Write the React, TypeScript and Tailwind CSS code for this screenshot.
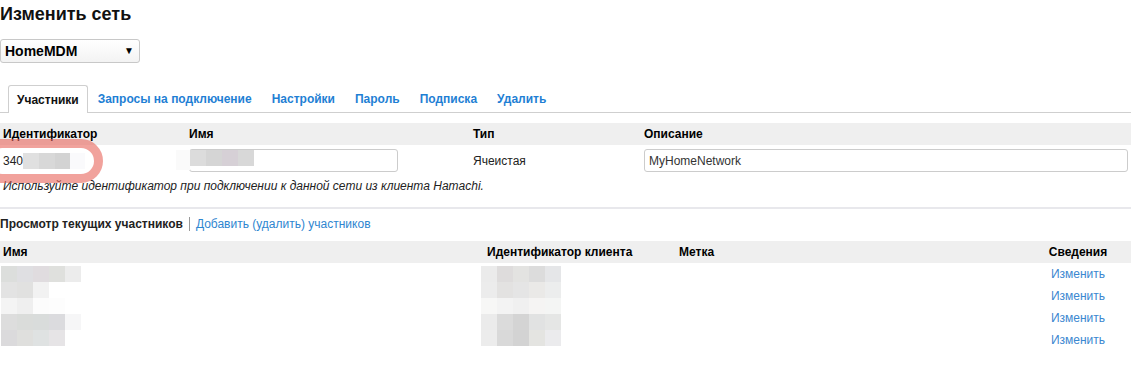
import React from "react";

const F = "font-['Liberation_Sans',Arial,sans-serif]";

function Mosaic({ rows, cell = 16 }: { rows: string[][]; cell?: number }) {
  return (
    <div className="flex flex-col">
      {rows.map((r, i) => (
        <div key={i} className="flex">
          {r.map((c, j) => (
            <div key={j} style={{ width: cell, height: cell, background: c }} />
          ))}
        </div>
      ))}
    </div>
  );
}

const nameMosaic = [
  ["#dcdedc", "#dfdfe2", "#e0dcdf", "#dfe0dd", "#ececec"],
  ["#e3e3e3", "#e1e1e0", "#f2f2f2", "#ffffff", "#ffffff"],
  ["#f4f4f4", "#efefef", "#fcfcfc", "#fdfdfd", "#ffffff"],
  ["#dddddd", "#dadcda", "#d9dcdb", "#dbdbde", "#f6f6f7"],
  ["#dbdadc", "#dfdfdd", "#dfe2e2", "#e6e4e6", "#ffffff"],
];

const idMosaic = [
  ["#ebebeb", "#dedcdc", "#e3e3e1", "#dcdcdc", "#e5e6e8"],
  ["#ececec", "#e3e2e1", "#e5e5e5", "#eae9e7", "#eceded"],
  ["#f7f7f6", "#f3f3f3", "#f0f0f0", "#f5f4f3", "#f4f5f4"],
  ["#ebebeb", "#dbdbdb", "#d4d4d4", "#e1e2e2", "#e5e6e5"],
  ["#ececec", "#d9d9d9", "#d3d3d3", "#e4e4e1", "#ebebed"],
];

export default function App() {
  const tabs = ["Запросы на подключение", "Настройки", "Пароль", "Подписка", "Удалить"];
  return (
    <div className={`${F} relative w-[1144px] h-[372px] overflow-hidden bg-white text-[12px] text-[#222]`}>
      <div className="w-[1131px]">
        <h1 className="pt-[3px] text-[18px] font-bold leading-[22px] text-[#111]">Изменить сеть</h1>

        <div className="mt-[14px] flex h-[24px] w-[140px] items-center justify-between rounded-[3px] border border-[#c8c8c8] bg-gradient-to-b from-white to-[#f3f3f3] pl-[4px] pr-[5px]">
          <span className="text-[14px] font-bold text-black">HomeMDM</span>
          <span className="text-[10px] leading-none text-black">▼</span>
        </div>

        <div className="mt-[22px] flex h-[28px] items-end border-b border-[#cfcfcf]">
          <div className="-mb-px ml-[8px] flex h-[28px] items-center rounded-t-[3px] border border-b-0 border-[#cfcfcf] bg-white px-[8px] font-bold text-[#111]">
            Участники
          </div>
          {tabs.map((t) => (
            <div key={t} className="flex h-[27px] items-center px-[10px] font-bold text-[#1f7fd4]">
              {t}
            </div>
          ))}
        </div>

        <div className="mt-[10px] grid h-[22px] grid-cols-[189px_284px_171px_1fr] items-center bg-[#efefef] font-bold text-black">
          <div className="pl-[3px]">Идентификатор</div>
          <div>Имя</div>
          <div>Тип</div>
          <div>Описание</div>
        </div>

        <div className="relative grid grid-cols-[189px_284px_171px_1fr] items-center pt-[4px]">
          <div className="flex items-center pl-[3px]">
            <span>340</span>
            <div className="flex">
              <div className="h-[16px] w-[16px] bg-[#e0e0e0]" />
              <div className="h-[16px] w-[16px] bg-[#d8d8d8]" />
              <div className="h-[16px] w-[15px] bg-[#d3d3d3]" />
              <div className="h-[16px] w-[15px] bg-[#fafafc]" />
            </div>
          </div>
          <div className="relative">
            <div className="h-[23px] w-[209px] rounded-[3px] border border-[#cccccc] bg-white" />
            <div className="absolute left-[-13px] top-[1px] flex">
              <div className="h-[20px] w-[14px] bg-[#fafafa]" />
              <div className="h-[16px] w-[16px] bg-[#dcdcdc]" />
              <div className="h-[16px] w-[16px] bg-[#d5d5d5]" />
              <div className="h-[16px] w-[16px] bg-[#d6d0d6]" />
              <div className="h-[16px] w-[16px] bg-[#d8d8d8]" />
            </div>
          </div>
          <div className="text-[#222]">Ячеистая</div>
          <div>
            <div className="flex h-[23px] w-[484px] items-center rounded-[3px] border border-[#cccccc] bg-white pl-[4px] text-[#333]">
              MyHomeNetwork
            </div>
          </div>
        </div>

        <div className="mt-[6px] pl-[3px] italic leading-[16px] text-[#222]">
          Используйте идентификатор при подключении к данной сети из клиента Hamachi.
        </div>

        <div className="mt-[13px] h-[2px] bg-[#e8e8ec]" />

        <div className="mt-[7px] flex items-center leading-[16px]">
          <span className="font-bold text-[#222]">Просмотр текущих участников</span>
          <span className="mx-[6px] h-[14px] w-px bg-[#999]" />
          <span className="text-[#2f86d0]">Добавить (удалить) участников</span>
        </div>

        <div className="mt-[9px] grid h-[22px] grid-cols-[484px_192px_1fr_76px] items-center bg-[#efefef] pr-[15px] font-bold text-black">
          <div className="pl-[3px]">Имя</div>
          <div className="pl-[3px]">Идентификатор клиента</div>
          <div className="pl-[3px]">Метка</div>
          <div className="text-center">Сведения</div>
        </div>

        <div className="relative">
          {[0, 1, 2, 3].map((i) => (
            <div key={i} className="grid h-[22px] grid-cols-[484px_192px_1fr_76px] items-center pr-[15px]">
              <div />
              <div />
              <div />
              <div className="text-center text-[#3b87d0]">Изменить</div>
            </div>
          ))}
          <div className="absolute left-[1px] top-[3px]">
            <Mosaic rows={nameMosaic} />
          </div>
          <div className="absolute left-[481px] top-[3px]">
            <Mosaic rows={idMosaic} />
          </div>
        </div>
      </div>

      <div className="pointer-events-none absolute left-[-20px] top-[139px] h-[44px] w-[123px] rounded-[22px] border-[9px] border-[rgba(232,100,90,0.6)]" />
    </div>
  );
}
